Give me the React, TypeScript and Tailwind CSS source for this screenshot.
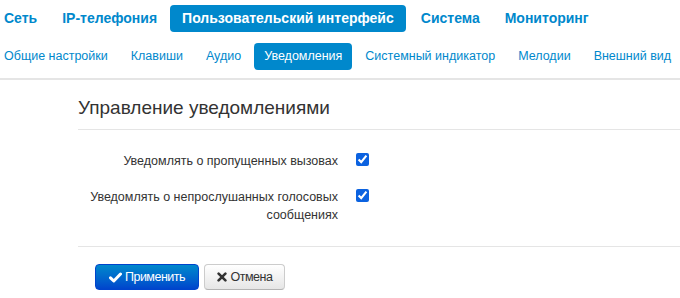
import React from "react";

const top = ["Сеть", "IP-телефония", "Пользовательский интерфейс", "Система", "Мониторинг"];
const sub = ["Общие настройки", "Клавиши", "Аудио", "Уведомления", "Системный индикатор", "Мелодии", "Внешний вид"];

export default function App() {
  return (
    <div className="w-[680px] h-[298px] overflow-hidden bg-white text-[#333]" style={{ fontFamily: '"Liberation Sans", Arial, sans-serif' }}>
      <div className="flex gap-[1px] -ml-2 pt-[5px]">
        {top.map((t) => (
          <div
            key={t}
            className={
              "h-[27px] flex items-center text-[14px] font-bold rounded-[4px] whitespace-nowrap " +
              (t === "Пользовательский интерфейс" ? "bg-[#0088cc] text-white px-3 mr-[2px]" : "text-[#0088cc] px-3")
            }
          >
            {t}
          </div>
        ))}
      </div>
      <div className="border-b-2 border-[#e5e5e5] pb-2">
        <div className="flex gap-[3px] -ml-[6px] mt-[11px]">
          {sub.map((t) => (
            <div
              key={t}
              className={
                "h-[27px] px-[10px] flex items-center text-[12.5px] rounded-[4px] whitespace-nowrap " +
                (t === "Уведомления" ? "bg-[#0088cc] text-white" : "text-[#0088cc]")
              }
            >
              {t}
            </div>
          ))}
        </div>
      </div>
      <div className="pl-[78px] pt-4">
        <div className="text-[19px] leading-[24px] pb-[9px] border-b border-[#e5e5e5]">Управление уведомлениями</div>
        <div className="flex flex-col gap-[18px] mt-[22px] pb-[22px] border-b border-[#e5e5e5]">
          <div className="flex items-start">
            <div className="w-[260px] text-right text-[12.5px] leading-[18px]">Уведомлять о пропущенных вызовах</div>
            <input type="checkbox" defaultChecked className="ml-[18px] mt-[1px] w-[13px] h-[13px] m-0 accent-[#0b62e0]" />
          </div>
          <div className="flex items-start">
            <div className="w-[260px] text-right text-[12.5px] leading-[18px]">
              Уведомлять о непрослушанных голосовых сообщениях
            </div>
            <input type="checkbox" defaultChecked className="ml-[18px] mt-[1px] w-[13px] h-[13px] m-0 accent-[#0b62e0]" />
          </div>
        </div>
        <div className="flex gap-[5px] pl-[17px] pt-[17px]">
          <button className="h-[26px] w-[104px] flex items-center justify-center gap-[3px] rounded-[4px] border border-[#0044cc] bg-gradient-to-b from-[#0088cc] to-[#0044cc] text-white text-[12.5px] tracking-[-0.5px]">
            <svg width="13" height="11" viewBox="0 0 13 11">
              <path d="M1.5 5.8 L4.8 9 L11.5 2" fill="none" stroke="white" strokeWidth="3" strokeLinecap="round" strokeLinejoin="round" />
            </svg>
            <span>Применить</span>
          </button>
          <button className="h-[26px] w-[81px] flex items-center justify-center gap-[4px] rounded-[4px] border border-[#cccccc] border-b-[#b3b3b3] bg-gradient-to-b from-white to-[#e6e6e6] text-[#333] text-[12.5px] tracking-[-0.5px]">
            <svg width="10" height="10" viewBox="0 0 10 10">
              <path d="M1.6 1.6 L8.4 8.4 M8.4 1.6 L1.6 8.4" fill="none" stroke="#333" strokeWidth="2.6" strokeLinecap="round" />
            </svg>
            <span>Отмена</span>
          </button>
        </div>
      </div>
    </div>
  );
}
